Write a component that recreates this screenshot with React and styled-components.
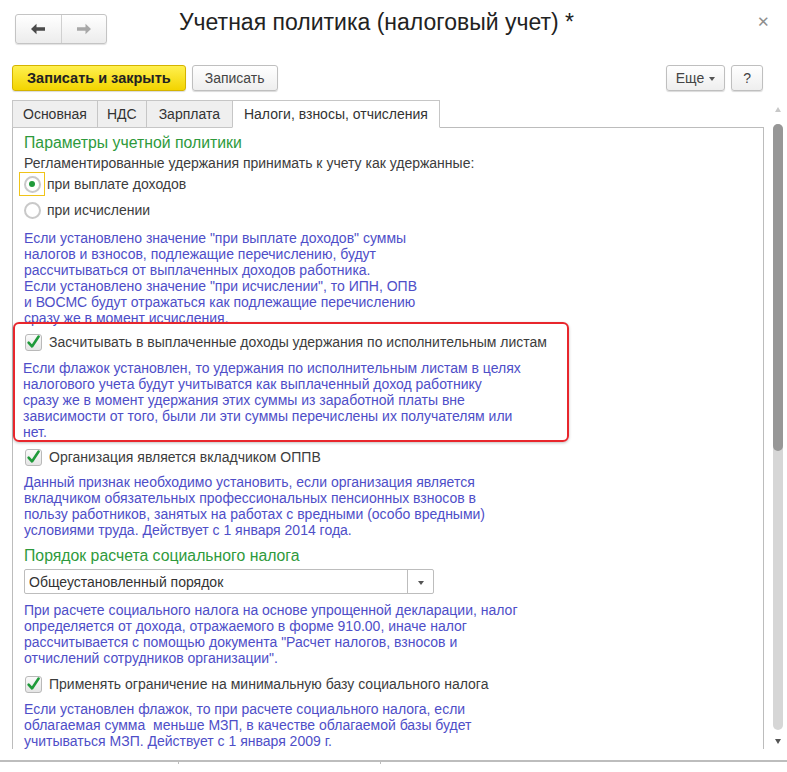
import React from "react";
import styled, { createGlobalStyle } from "styled-components";

const Global = createGlobalStyle`
  html, body { margin: 0; padding: 0; background: #fff; }
  body { font-family: "Liberation Sans", Arial, sans-serif; color: #333; }
  * { box-sizing: border-box; }
`;

const Page = styled.div`
  width: 787px;
  height: 772px;
  overflow: hidden;
  display: flex;
  flex-direction: column;
  background: #fff;
`;

const Header = styled.div`
  display: flex;
  align-items: center;
  height: 48px;
  padding: 9px 0 0 15px;
`;

const NavGroup = styled.div`
  display: flex;
  width: 92px;
  height: 30px;
  border: 1px solid #c4c4c4;
  border-radius: 3px;
  background: linear-gradient(#ffffff, #ececec);
  box-shadow: 0 1px 1px rgba(0,0,0,0.12);
`;

const NavBtn = styled.div`
  flex: 1;
  display: flex;
  align-items: center;
  justify-content: center;
  border-left: ${p => (p.$divider ? "1px solid #d0d0d0" : "none")};
`;

const Title = styled.div`
  margin-left: 72px;
  font-size: 23px;
  color: #222;
  flex: 1;
  margin-top: -12px;
`;

const Close = styled.div`
  width: 30px;
  margin-top: -14px;
  font-size: 15px;
  color: #8e8e8e;
`;

const Toolbar = styled.div`
  display: flex;
  align-items: center;
  gap: 6px;
  padding: 17px 24px 0 12px;
  height: 43px;
`;

const Button = styled.div`
  height: 26px;
  padding: 0 ${p => p.$px || 12}px;
  display: flex;
  align-items: center;
  gap: 5px;
  font-size: ${p => (p.$primary ? "14.5px" : "14px")};
  border-radius: 3px;
  color: ${p => (p.$primary ? "#222" : "#444")};
  font-weight: ${p => (p.$primary ? "bold" : "normal")};
  border: 1px solid ${p => (p.$primary ? "#d4b300" : "#bfbfbf")};
  background: ${p =>
    p.$primary
      ? "linear-gradient(#fff04f, #f3d400)"
      : "linear-gradient(#ffffff, #eeeeee)"};
  box-shadow: 0 1px 1px rgba(0,0,0,0.15);
  margin-left: ${p => (p.$push ? "auto" : "0")};
`;

const Caret = styled.span`
  width: 0;
  height: 0;
  border-left: 3.5px solid transparent;
  border-right: 3.5px solid transparent;
  border-top: 4px solid #555;
  margin-top: 2px;
`;

const Body = styled.div`
  display: flex;
  height: 669px;
  padding-top: 9px;
`;

const Left = styled.div`
  width: 764px;
  padding-left: 12px;
  display: flex;
  flex-direction: column;
`;

const Tabs = styled.div`
  display: flex;
  height: 27px;
`;

const Tab = styled.div`
  height: 28px;
  padding: 0 ${p => p.$px}px;
  display: flex;
  align-items: center;
  font-size: 14px;
  color: #333;
  background: ${p => (p.$active ? "#fff" : "#efefef")};
  border: 1px solid #c6c6c6;
  border-bottom: ${p => (p.$active ? "1px solid #fff" : "1px solid #c6c6c6")};
  margin-left: ${p => (p.$first ? 0 : -1)}px;
  position: relative;
  z-index: ${p => (p.$active ? 2 : 1)};
`;

const Panel = styled.div`
  flex: 1;
  border: 1px solid #bcbcbc;
  border-bottom: none;
  margin-bottom: 12px;
  padding: 5px 0 0 11px;
  display: flex;
  flex-direction: column;
`;

const GroupTitle = styled.div`
  font-size: 15.8px;
  line-height: 20px;
  color: #2e9a3c;
  height: 20px;
`;

const Text = styled.div`
  font-size: 14px;
  line-height: 16px;
  color: #3c3c3c;
  white-space: nowrap;
`;

const Hint = styled.div`
  font-size: 14px;
  line-height: 16px;
  color: #4e4ec8;
  white-space: nowrap;
`;

const Row = styled.div`
  display: flex;
  align-items: center;
  height: 26px;
  gap: 7px;
  padding-left: ${p => p.$pl || 0}px;
  margin-top: ${p => p.$mt || 0}px;
`;

const RadioFocus = styled.div`
  width: 26px;
  height: 24px;
  margin-left: -5px;
  margin-right: -5px;
  display: flex;
  align-items: center;
  justify-content: center;
  border: 1px solid ${p => (p.$focus ? "#f0c419" : "transparent")};
`;

const RadioCircle = styled.div`
  width: 17px;
  height: 17px;
  border-radius: 50%;
  border: 2px solid #c9c9c9;
  background: #fff;
  display: flex;
  align-items: center;
  justify-content: center;
  &::after {
    content: "";
    width: 6px;
    height: 6px;
    border-radius: 50%;
    background: ${p => (p.$on ? "#1f9a3a" : "transparent")};
  }
`;

const Highlight = styled.div`
  margin: -4px 0 0 -11px;
  width: 556px;
  height: 120px;
  border: 2px solid #e8262c;
  border-radius: 6px;
  box-shadow: 0 1px 3px rgba(0,0,0,0.25);
  padding: 5px 0 0 8px;
  position: relative;
`;

const Select = styled.div`
  margin-top: 3px;
  width: 410px;
  height: 25px;
  border: 1px solid #bdbdbd;
  border-radius: 2px;
  display: flex;
  font-size: 14px;
  color: #333;
`;

const SelectText = styled.div`
  flex: 1;
  display: flex;
  align-items: center;
  padding-left: 4px;
`;

const SelectBtn = styled.div`
  width: 26px;
  border-left: 1px solid #bdbdbd;
  display: flex;
  align-items: center;
  justify-content: center;
`;

const Scroll = styled.div`
  width: 23px;
  display: flex;
  flex-direction: column;
  align-items: center;
  padding: 4px 0 0 4px;
`;

const Arrow = styled.div`
  width: 0;
  height: 0;
  border-left: 3px solid transparent;
  border-right: 3px solid transparent;
  ${p => (p.$up ? "border-bottom: 5px solid #c8c8c8;" : "border-top: 5px solid #555;")}
  margin: ${p => (p.$up ? "3px 0 12px" : "9px 0 0")};
`;

const Track = styled.div`
  width: 10px;
  height: 606px;
  border-radius: 5px;
  background: #d6d6d6;
  display: flex;
  flex-direction: column;
`;

const Thumb = styled.div`
  width: 10px;
  height: 327px;
  border-radius: 5px;
  background: #979797;
`;

const Status = styled.div`
  display: flex;
  height: 4px;
  border-top: 2px solid #bdbdbd;
`;

const StatusCell = styled.div`
  width: ${p => p.$w}px;
  border-right: 1px solid #bdbdbd;
`;

const Block = styled.div`
  margin-top: ${p => p.$mt || 0}px;
`;

const Check = () => (
  <svg width="17" height="17" viewBox="0 0 17 17">
    <defs>
      <linearGradient id="cbg" x1="0" y1="0" x2="0" y2="1">
        <stop offset="0" stopColor="#fbfbfb" />
        <stop offset="1" stopColor="#e4e4e4" />
      </linearGradient>
    </defs>
    <rect x="0.5" y="0.5" width="16" height="16" rx="2.5" fill="url(#cbg)" stroke="#b9b9b9" />
    <path d="M3.6 8.6 L7 12.4 L13.6 2.6" fill="none" stroke="#1f9a3a" strokeWidth="2.6" strokeLinecap="round" strokeLinejoin="round" />
  </svg>
);

const ArrowIcon = ({ dir, color }) => (
  <svg width="16" height="12" viewBox="0 0 16 12">
    <path
      d={dir === "left" ? "M1 6 L6.5 0.8 L6.5 4.3 L15 4.3 L15 7.7 L6.5 7.7 L6.5 11.2 Z" : "M15 6 L9.5 0.8 L9.5 4.3 L1 4.3 L1 7.7 L9.5 7.7 L9.5 11.2 Z"}
      fill={color}
    />
  </svg>
);

const CheckRow = ({ children, pl = 2, mt }) => (
  <Row $pl={pl} $mt={mt}>
    <Check />
    <Text>{children}</Text>
  </Row>
);

const Lines = ({ lines, mt }) => (
  <Block $mt={mt}>
    {lines.map((l, i) => (
      <Hint key={i}>{l}</Hint>
    ))}
  </Block>
);

export default function App() {
  return (
    <Page>
      <Global />
      <Header>
        <NavGroup>
          <NavBtn><ArrowIcon dir="left" color="#4a4a4a" /></NavBtn>
          <NavBtn $divider><ArrowIcon dir="right" color="#a8a8a8" /></NavBtn>
        </NavGroup>
        <Title>Учетная политика (налоговый учет) *</Title>
        <Close>✕</Close>
      </Header>
      <Toolbar>
        <Button $primary $px={14}>Записать и закрыть</Button>
        <Button $px={12}>Записать</Button>
        <Button $push $px={9}>Еще <Caret /></Button>
        <Button $px={11}>?</Button>
      </Toolbar>
      <Body>
        <Left>
          <Tabs>
            <Tab $first $px={10}>Основная</Tab>
            <Tab $px={9}>НДС</Tab>
            <Tab $px={12}>Зарплата</Tab>
            <Tab $active $px={11}>Налоги, взносы, отчисления</Tab>
          </Tabs>
          <Panel>
            <GroupTitle>Параметры учетной политики</GroupTitle>
            <Block $mt={2}>
              <Text>Регламентированные удержания принимать к учету как удержанные:</Text>
            </Block>
            <Row $pl={0}>
              <RadioFocus $focus><RadioCircle $on /></RadioFocus>
              <Text>при выплате доходов</Text>
            </Row>
            <Row $pl={0}>
              <RadioFocus><RadioCircle /></RadioFocus>
              <Text>при исчислении</Text>
            </Row>
            <Lines
              mt={7}
              lines={[
                "Если установлено значение \"при выплате доходов\" суммы",
                "налогов и взносов, подлежащие перечислению, будут",
                "рассчитываться от выплаченных доходов работника.",
                "Если установлено значение \"при исчислении\", то ИПН, ОПВ",
                "и ВОСМС будут отражаться как подлежащие перечислению",
                "сразу же в момент исчисления.",
              ]}
            />
            <Highlight>
              <CheckRow>Засчитывать в выплаченные доходы удержания по исполнительным листам</CheckRow>
              <Lines
                mt={5}
                lines={[
                  "Если флажок установлен, то удержания по исполнительным листам в целях",
                  "налогового учета будут учитыватся как выплаченный доход работнику",
                  "сразу же в момент удержания этих суммы из заработной платы вне",
                  "зависимости от того, были ли эти суммы перечислены их получателям или",
                  "нет.",
                ]}
              />
            </Highlight>
            <CheckRow pl={1} mt={2}>Организация является вкладчиком ОППВ</CheckRow>
            <Lines
              mt={4}
              lines={[
                "Данный признак необходимо установить, если организация является",
                "вкладчиком обязательных профессиональных пенсионных взносов в",
                "пользу работников, занятых на работах с вредными (особо вредными)",
                "условиями труда. Действует с 1 января 2014 года.",
              ]}
            />
            <Block $mt={8}>
              <GroupTitle>Порядок расчета социального налога</GroupTitle>
            </Block>
            <Select>
              <SelectText>Общеустановленный порядок</SelectText>
              <SelectBtn><Caret /></SelectBtn>
            </Select>
            <Lines
              mt={8}
              lines={[
                "При расчете социального налога на основе упрощенной декларации, налог",
                "определяется от дохода, отражаемого в форме 910.00, иначе налог",
                "рассчитывается с помощью документа \"Расчет налогов, взносов и",
                "отчислений сотрудников организации\".",
              ]}
            />
            <CheckRow pl={1} mt={5}>Применять ограничение на минимальную базу социального налога</CheckRow>
            <Lines
              mt={4}
              lines={[
                "Если установлен флажок, то при расчете социального налога, если",
                "облагаемая сумма\u00a0 меньше МЗП, в качестве облагаемой базы будет",
                "учитываться МЗП. Действует с 1 января 2009 г.",
              ]}
            />
          </Panel>
        </Left>
        <Scroll>
          <Arrow $up />
          <Track><Thumb /></Track>
          <Arrow />
        </Scroll>
      </Body>
      <Status>
        <StatusCell $w={179} />
        <StatusCell $w={202} />
      </Status>
    </Page>
  );
}
